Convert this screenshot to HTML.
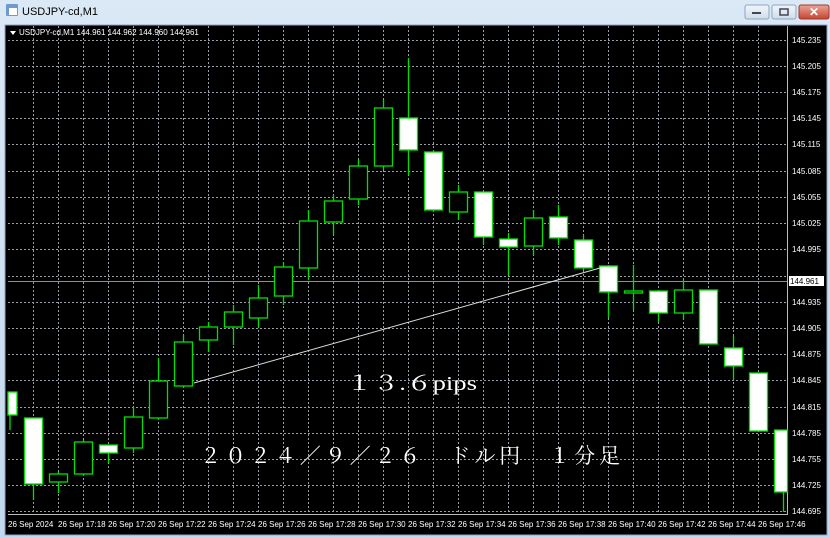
<!DOCTYPE html>
<html><head><meta charset="utf-8"><style>
html,body{margin:0;padding:0;width:830px;height:538px;overflow:hidden;background:#c9dcf0}
svg{display:block}
</style></head><body>
<svg width="830" height="538" xmlns="http://www.w3.org/2000/svg" font-family="Liberation Sans, sans-serif">
<defs><linearGradient id="tb" x1="0" y1="0" x2="0" y2="1"><stop offset="0" stop-color="#dbe8f6"/><stop offset="1" stop-color="#c3d8ee"/></linearGradient>
<linearGradient id="cl" x1="0" y1="0" x2="0" y2="1"><stop offset="0" stop-color="#e9a59a"/><stop offset="1" stop-color="#c7442f"/></linearGradient>
<linearGradient id="bt" x1="0" y1="0" x2="0" y2="1"><stop offset="0" stop-color="#f2f6fb"/><stop offset="1" stop-color="#cfdcea"/></linearGradient></defs>
<rect width="830" height="538" fill="url(#tb)"/>
<rect x="6" y="4" width="12" height="12" fill="#6d9bd0" rx="1"/><rect x="9" y="8" width="8" height="7" fill="#fff"/>
<text x="22" y="15" font-size="11" fill="#000">USDJPY-cd,M1</text>
<rect x="745" y="5" width="24" height="14" rx="2" fill="url(#bt)" stroke="#8ea5c0"/><rect x="752" y="12" width="9" height="2" fill="#445"/>
<rect x="772" y="5" width="24" height="14" rx="2" fill="url(#bt)" stroke="#8ea5c0"/><rect x="780" y="9" width="8" height="6" fill="none" stroke="#445" stroke-width="1.5"/>
<rect x="799" y="5" width="30" height="14" rx="2" fill="url(#cl)" stroke="#9b3b2c"/><text x="814" y="16" font-size="12" font-weight="bold" fill="#fff" text-anchor="middle">✕</text>
<rect x="5" y="25" width="822" height="510" fill="#000" stroke="#8ea5c0"/>
<g id="grid" stroke="#9aa0aa" stroke-width="1" stroke-dasharray="2,2">
<path d="M8 40.5H787M8 66.5H787M8 92.5H787M8 118.5H787M8 144.5H787M8 171.5H787M8 197.5H787M8 223.5H787M8 249.5H787M8 276.5H787M8 302.5H787M8 328.5H787M8 354.5H787M8 380.5H787M8 407.5H787M8 433.5H787M8 459.5H787M8 485.5H787M8 511.5H787"/>
<path d="M33.5 26V514M58.5 26V514M83.5 26V514M108.5 26V514M133.5 26V514M158.5 26V514M183.5 26V514M208.5 26V514M233.5 26V514M258.5 26V514M283.5 26V514M308.5 26V514M333.5 26V514M358.5 26V514M383.5 26V514M408.5 26V514M433.5 26V514M458.5 26V514M483.5 26V514M508.5 26V514M533.5 26V514M558.5 26V514M583.5 26V514M608.5 26V514M633.5 26V514M658.5 26V514M683.5 26V514M708.5 26V514M733.5 26V514M758.5 26V514"/>
</g>
<path d="M787.5 26V514.5H8" stroke="#bbb" fill="none"/>
<line x1="8" y1="281.5" x2="787" y2="281.5" stroke="#8a8f99"/>
<g stroke="#00e000" stroke-width="1.3">
<path d="M10 415V430M33.5 484V500M58.5 472V493M83.5 440V476M108.5 453V463M133.5 407V453M158.5 358V420M183.5 335V388M208.5 322V352M233.5 305V345M258.5 285V328M283.5 262V305M308.5 210V280M333.5 195V235M358.5 160V205M383.5 100V170M408.5 58V175M433.5 150V212M458.5 185V220M483.5 237V245M508.5 233V275M533.5 210V255M558.5 205V245M583.5 235V270M608.5 265V318M633.5 265V310M658.5 291V322M683.5 280V320M708.5 290V344M733.5 336V380M758.5 373V431M783.5 430V512"/>
</g>
<g stroke="#00e000" stroke-width="1.3" fill="#fff">
<rect x="8" y="392" width="9" height="23"/>
<rect x="24.5" y="418" width="18" height="66"/>
<rect x="99.5" y="445" width="18" height="8"/>
<rect x="399.5" y="118" width="18" height="32"/>
<rect x="424.5" y="152" width="18" height="58"/>
<rect x="474.5" y="192" width="18" height="45"/>
<rect x="499.5" y="239" width="18" height="8"/>
<rect x="549.5" y="217" width="18" height="21"/>
<rect x="574.5" y="240" width="18" height="28"/>
<rect x="599.5" y="266" width="18" height="26"/>
<rect x="649.5" y="291" width="18" height="22"/>
<rect x="699.5" y="290" width="18" height="54"/>
<rect x="724.5" y="348" width="18" height="18"/>
<rect x="749.5" y="373" width="18" height="58"/>
<rect x="774.5" y="430" width="13" height="62"/>
</g>
<g stroke="#00e000" stroke-width="1.3" fill="#000">
<rect x="49.5" y="474" width="18" height="8"/>
<rect x="74.5" y="442" width="18" height="32"/>
<rect x="124.5" y="417" width="18" height="31"/>
<rect x="149.5" y="381" width="18" height="37"/>
<rect x="174.5" y="342" width="18" height="44"/>
<rect x="199.5" y="327" width="18" height="13"/>
<rect x="224.5" y="312" width="18" height="15"/>
<rect x="249.5" y="298" width="18" height="20"/>
<rect x="274.5" y="267" width="18" height="29"/>
<rect x="299.5" y="221" width="18" height="47"/>
<rect x="324.5" y="201" width="18" height="21"/>
<rect x="349.5" y="166" width="18" height="33"/>
<rect x="374.5" y="108" width="18" height="58"/>
<rect x="449.5" y="192" width="18" height="20"/>
<rect x="524.5" y="218" width="18" height="28"/>
<rect x="674.5" y="290" width="18" height="23"/>
<rect x="624.5" y="291" width="18" height="2"/>
</g>
<line x1="194" y1="383" x2="600" y2="268" stroke="#ddd" stroke-width="1"/>
<g fill="#fff" font-size="8">
<text x="19" y="35">USDJPY-cd,M1  144.961 144.962 144.960 144.961</text>
<path d="M10 31h6l-3 4z"/>
</g>
<g fill="#fff" font-size="8">
<text x="792" y="43">145.235</text><text x="792" y="69">145.205</text><text x="792" y="95">145.175</text><text x="792" y="121">145.145</text><text x="792" y="147">145.115</text><text x="792" y="174">145.085</text><text x="792" y="200">145.055</text><text x="792" y="226">145.025</text><text x="792" y="252">144.995</text><text x="792" y="305">144.935</text><text x="792" y="331">144.905</text><text x="792" y="357">144.875</text><text x="792" y="383">144.845</text><text x="792" y="410">144.815</text><text x="792" y="436">144.785</text><text x="792" y="462">144.755</text><text x="792" y="488">144.725</text><text x="792" y="514">144.695</text>
</g>
<rect x="789" y="276" width="35" height="10" fill="#fff"/><text x="790" y="284" font-size="8" fill="#000">144.961</text>
<g fill="#fff" font-size="8">
<text x="8" y="527">26 Sep 2024</text><text x="58" y="527">26 Sep 17:18</text><text x="108" y="527">26 Sep 17:20</text><text x="158" y="527">26 Sep 17:22</text><text x="208" y="527">26 Sep 17:24</text><text x="258" y="527">26 Sep 17:26</text><text x="308" y="527">26 Sep 17:28</text><text x="358" y="527">26 Sep 17:30</text><text x="408" y="527">26 Sep 17:32</text><text x="458" y="527">26 Sep 17:34</text><text x="508" y="527">26 Sep 17:36</text><text x="558" y="527">26 Sep 17:38</text><text x="608" y="527">26 Sep 17:40</text><text x="658" y="527">26 Sep 17:42</text><text x="708" y="527">26 Sep 17:44</text><text x="758" y="527">26 Sep 17:46</text>
</g>
<g fill="#fff" font-family="Liberation Serif, Noto Serif CJK SC, serif">
<text x="346" y="390" font-size="20" textLength="131" lengthAdjust="spacingAndGlyphs">１３.６pips</text>
<text x="200" y="463" font-size="21" textLength="420" lengthAdjust="spacing">２０２４／９／２６　ドル円　１分足</text>
</g>
</svg>
</body></html>
